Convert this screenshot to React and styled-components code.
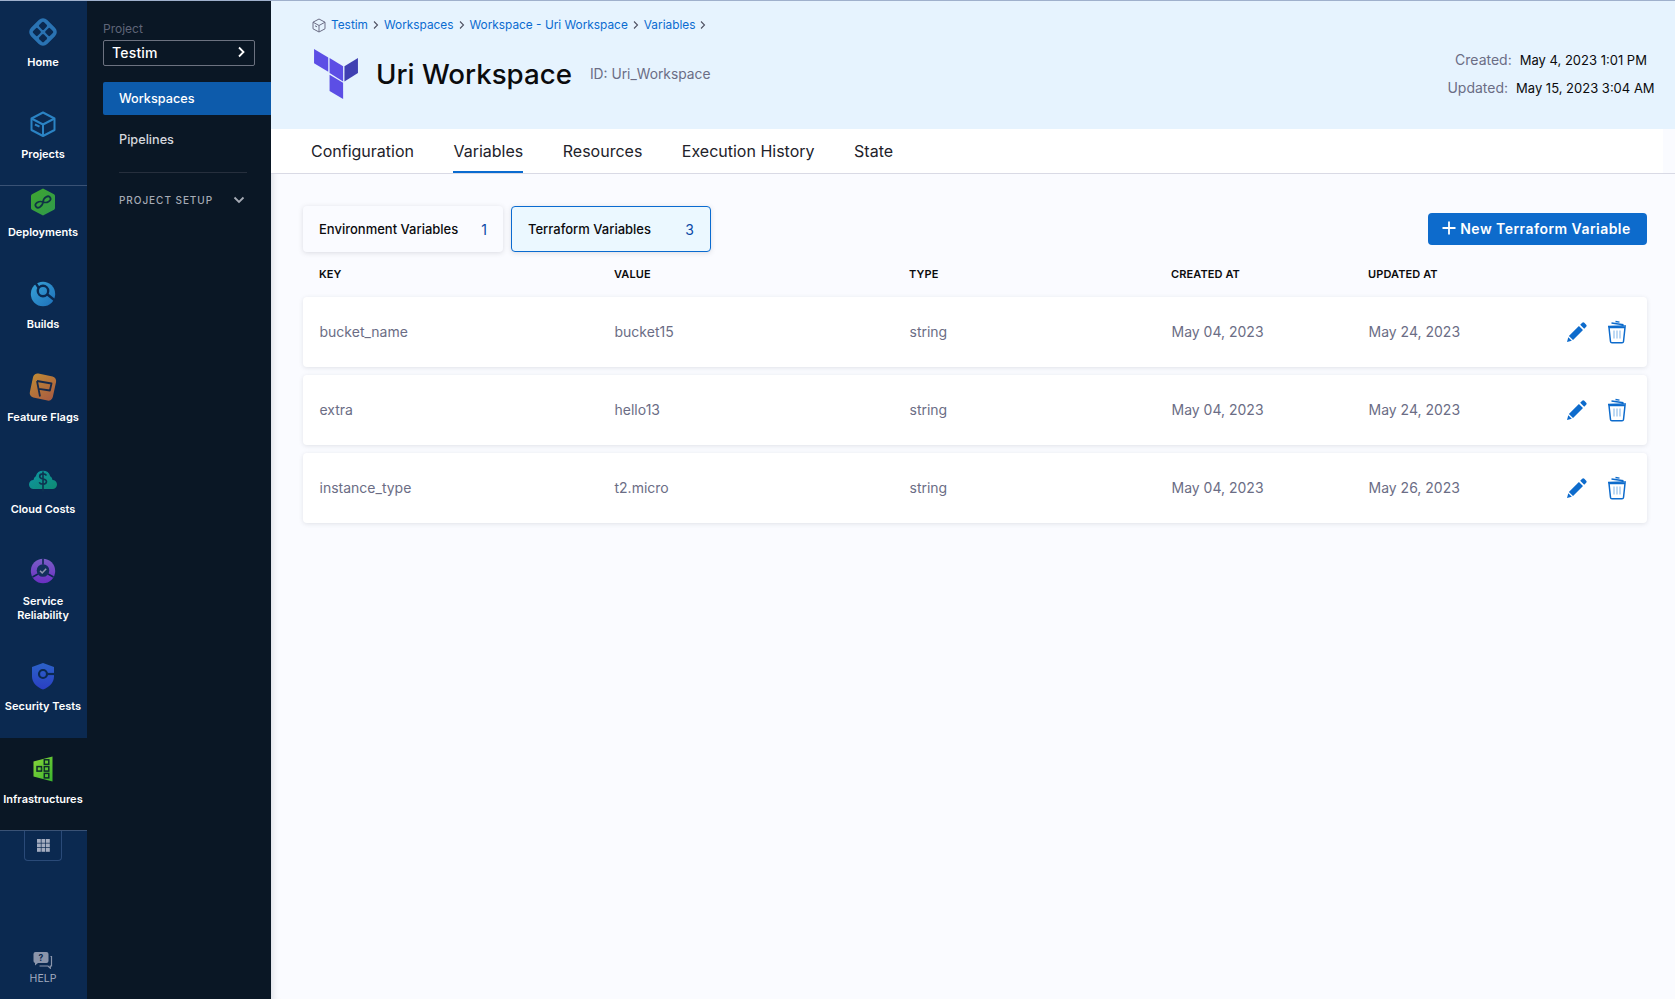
import React from 'react';
import styled, { createGlobalStyle } from 'styled-components';

const Global = createGlobalStyle`
  html, body { margin: 0; padding: 0; height: 100%; overflow: hidden; }
  body { font-family: Inter, "Noto Sans", "Liberation Sans", sans-serif; -webkit-font-smoothing: antialiased; }
  #root { height: 100%; }
  * { box-sizing: border-box; }
`;

const Page = styled.div`
  display: grid;
  grid-template-columns: 87px 184px 1fr;
  height: 999px;
  width: 1675px;
  overflow: hidden;
  background: #fafbff;
  border-top: 1px solid #9fb0cc;
`;

/* ---------- primary nav ---------- */
const Nav = styled.nav`
  display: flex;
  flex-direction: column;
  background: #0b2950;
  height: 998px;
`;
const PinnedGroup = styled.div`
  border-bottom: 1px solid #3a5275;
  height: 185px;
  flex: none;
`;
const NavItem = styled.a`
  display: flex;
  flex-direction: column;
  align-items: center;
  height: ${p => p.$h}px;
  padding: ${p => p.$top}px 1px 0 0;
  background: ${p => (p.$active ? '#0a1725' : 'transparent')};
  flex: none;
`;
const NavLabel = styled.span`
  color: #fff;
  font-size: 11px;
  font-weight: 600;
  line-height: 14px;
  margin-top: 8px;
  text-align: center;
  white-space: pre-line;
`;
const IconBox = styled.span`
  display: block;
  width: 30px;
  height: 30px;
  flex: none;
  svg { display: block; }
`;
const NavRule = styled.div`
  height: 1px;
  background: #3a5275;
  flex: none;
`;
const GridToggle = styled.button`
  width: 38px;
  height: 30px;
  margin-left: 24px;
  background: transparent;
  border: 1px solid #2a4a78;
  border-top: 0;
  border-radius: 0 0 4px 4px;
  display: flex;
  align-items: center;
  justify-content: center;
  padding: 0;
  flex: none;
`;
const HelpLink = styled.a`
  margin-top: auto;
  display: flex;
  flex-direction: column;
  align-items: center;
  padding: 0 1px 13px 0;
  color: #a3acc0;
  font-size: 10.5px;
  line-height: 14px;
`;

/* ---------- secondary nav ---------- */
const Side = styled.aside`
  background: #0a1725;
  padding: 20px 0 0 16px;
  display: flex;
  flex-direction: column;
  position: relative;
  z-index: 1;
`;
const SideCaption = styled.div`
  color: #5f6578;
  font-size: 12px;
  line-height: 15px;
`;
const ProjectSelect = styled.div`
  width: 152px;
  height: 26px;
  margin-top: 4px;
  border: 1px solid #6c7280;
  border-radius: 2px;
  display: flex;
  align-items: center;
  justify-content: space-between;
  padding: 0 7px 2px 8px;
  color: #fff;
  font-size: 14px;
  font-weight: 500;
  letter-spacing: 0.2px;
`;
const SideLink = styled.a`
  display: flex;
  align-items: center;
  height: 33px;
  margin-top: ${p => p.$mt}px;
  padding: 0 0 1px 16px;
  font-size: 12.7px;
  font-weight: 500;
  color: ${p => (p.$active ? '#fff' : '#d5d8de')};
  background: ${p => (p.$active ? '#0d5bab' : 'transparent')};
  border-radius: 2px 0 0 2px;
`;
const SideDivider = styled.div`
  width: 128px;
  height: 1px;
  background: #262f3d;
  margin: 16px 0 0 16px;
`;
const SetupRow = styled.div`
  display: flex;
  align-items: center;
  justify-content: space-between;
  width: 126px;
  margin: 21px 0 0 16px;
  font-size: 10px;
  font-weight: 500;
  letter-spacing: 0.95px;
  color: #a6abb5;
`;

/* ---------- main ---------- */
const Main = styled.main`
  display: flex;
  flex-direction: column;
  min-width: 0;
  box-shadow: inset 8px 0 8px -8px rgba(10, 23, 37, 0.18);
`;
const Header = styled.header`
  height: 128px;
  background: #e6f3fe;
  padding: 16px 0 0 41px;
  position: relative;
  display: flex;
  flex-direction: column;
  flex: none;
`;
const Crumbs = styled.div`
  display: flex;
  align-items: center;
  height: 16px;
  font-size: 11.85px;
  color: #0a6bd0;
`;
const CrumbChevron = styled.svg`
  width: 16px;
  height: 16px;
  flex: none;
`;
const TitleRow = styled.div`
  display: flex;
  align-items: center;
  margin-top: 16px;
  margin-left: 2px;
`;
const Title = styled.h1`
  margin: 0 0 0 18px;
  font-size: 27.7px;
  line-height: 50px;
  font-weight: 500;
  color: #0b0b0d;
`;
const IdText = styled.span`
  margin-left: 18px;
  font-size: 13.8px;
  color: #6b6d85;
`;
const Stamps = styled.div`
  position: absolute;
  top: 51px;
  left: 1100px;
  width: 360px;
  display: flex;
  flex-direction: column;
  align-items: center;
  gap: 12px;
  line-height: 16px;
`;
const StampLine = styled.div`
  display: flex;
  gap: 8px;
  color: #0b0b0d;
  font-size: 13px;
  white-space: nowrap;
`;
const StampKey = styled.span`
  color: #6b6d85;
  font-size: 14px;
`;
const TabStrip = styled.div`
  display: flex;
  gap: 39.5px;
  height: 44px;
  padding-left: 40px;
  margin-right: 12px;
  background: #fff;
  flex: none;
`;
const TabRule = styled.div`
  height: 1px;
  background: #d9dae5;
  flex: none;
`;
const Tab = styled.a`
  display: flex;
  align-items: center;
  height: 44px;
  padding-top: 1px;
  font-size: 16px;
  color: #22222a;
  border-bottom: 2px solid ${p => (p.$active ? '#0a6bd0' : 'transparent')};
`;
const Content = styled.section`
  padding: 32px 28px 0 32px;
  flex: 1;
`;
const Toolbar = styled.div`
  display: flex;
  align-items: center;
  justify-content: space-between;
  height: 46px;
`;
const TypeTabs = styled.div`
  display: flex;
  gap: 8px;
`;
const TypeTab = styled.div`
  width: 200px;
  height: 46px;
  display: flex;
  align-items: center;
  justify-content: space-between;
  padding: 0 ${p => (p.$active ? 16 : 15)}px;
  border-radius: 4px;
  font-size: 13px;
  font-weight: 500;
  color: #0b0b0d;
  background: ${p => (p.$active ? '#ebf8ff' : '#fafbff')};
  border: 1px solid ${p => (p.$active ? '#0a6bd0' : 'transparent')};
  box-shadow: 0 1px 5px rgba(96, 97, 112, 0.2);
`;
const TypeCount = styled.span`
  font-size: 14px;
  font-weight: 400;
  color: #0b4aa6;
`;
const PrimaryButton = styled.button`
  width: 219px;
  height: 32px;
  display: flex;
  align-items: center;
  justify-content: center;
  gap: 4px;
  border: 0;
  border-radius: 4px;
  background: #0d6bcc;
  color: #fff;
  font-family: inherit;
  font-size: 14px;
  font-weight: 600;
  letter-spacing: 0.45px;
  padding: 0 2px 2px 0;
`;
const tableColumns = '295px 295px 262px 197px 1fr auto';
const TableHead = styled.div`
  display: grid;
  grid-template-columns: ${tableColumns};
  padding: 0 16px 2px;
  height: 45px;
  align-items: center;
  font-size: 11px;
  font-weight: 600;
  color: #0b0b0d;
  text-transform: uppercase;
  letter-spacing: 0.1px;
`;
const Rows = styled.div`
  display: flex;
  flex-direction: column;
  gap: 8px;
`;
const Row = styled.div`
  display: grid;
  grid-template-columns: ${tableColumns};
  align-items: center;
  height: 70px;
  padding: 0 20px 2px 16.5px;
  background: #fff;
  border-radius: 4px;
  box-shadow: 0 1px 4px rgba(96, 97, 112, 0.16);
  font-size: 14px;
  color: #6b6d85;
`;
const RowActions = styled.div`
  display: flex;
  align-items: center;
  gap: 19px;
  margin-top: 2px;
`;

/* ---------- drawn icons ---------- */
const HomeIcon = () => (
  <svg width="30" height="30" viewBox="0 0 30 30">
    <rect x="3.500" y="3.500" width="23" height="23" rx="6" fill="#2a73b3" transform="rotate(45 15 15)" />
    {[[15, 8.800], [8.800, 15], [21.200, 15], [15, 21.200]].map(([x, y]) => (
      <rect key={`${x}${y}`} x={x - 3.300} y={y - 3.300} width="6.600" height="6.600" rx="1.500" fill="#0b2950" transform={`rotate(45 ${x} ${y})`} />
    ))}
  </svg>
);
const ProjectsIcon = () => (
  <svg width="30" height="30" viewBox="0 0 30 30" fill="none" stroke="#2b83c4" strokeWidth="2" strokeLinejoin="round">
    <path d="M15 3.500 26.500 9.500V21L15 27 3.500 21V9.500Z" />
    <path d="M3.500 9.500 15 15.500 26.500 9.500M15 15.500V27" />
    <path d="M7 15.500l4.500 2.200" />
  </svg>
);
const DeployIcon = () => (
  <svg width="30" height="30" viewBox="0 0 30 30">
    <defs><linearGradient id="dg" x1="0" y1="0" x2="1" y2="1"><stop offset="0" stopColor="#3fa52f" /><stop offset="1" stopColor="#2f9a4c" /></linearGradient></defs>
    <path d="M15 1.500 26 7.200a2 2 0 0 1 1 1.700v12.200a2 2 0 0 1-1 1.700L15 28.500 4 22.800a2 2 0 0 1-1-1.700V8.900a2 2 0 0 1 1-1.700Z" fill="url(#dg)" />
    <path d="M15 15C12.500 11.500 6.500 11.500 6.500 15S12.500 18.500 15 15C17.500 11.500 23.500 11.500 23.500 15S17.500 18.500 15 15Z" fill="none" stroke="#0f3345" strokeWidth="1.700" transform="rotate(-32 15 15)" />
  </svg>
);
const BuildsIcon = () => (
  <svg width="30" height="30" viewBox="0 0 30 30">
    <defs><linearGradient id="bg" x1="0" y1="0" x2="1" y2="1"><stop offset="0" stopColor="#38a3d8" /><stop offset="1" stopColor="#1d6fb8" /></linearGradient></defs>
    <circle cx="15" cy="15" r="12.200" fill="url(#bg)" />
    <circle cx="15" cy="12" r="5.200" fill="none" stroke="#0b2950" strokeWidth="2.400" />
    <path d="M19.500 15.500l7.500 6M10.500 8.500 7 3.200" stroke="#0b2950" strokeWidth="2.400" />
  </svg>
);
const FlagsIcon = () => (
  <svg width="30" height="30" viewBox="0 0 30 30">
    <defs><linearGradient id="fg" x1="0" y1="0" x2="1" y2="1"><stop offset="0" stopColor="#c08a34" /><stop offset="1" stopColor="#a85a42" /></linearGradient></defs>
    <rect x="3.200" y="2.800" width="23.500" height="24.500" rx="4.500" fill="url(#fg)" transform="rotate(12 15 15)" />
    <path d="M9 9 23.500 11.500l-1.600 7-11-1.600M9 9l3 15.500" fill="none" stroke="#17294a" strokeWidth="1.800" strokeLinejoin="round" />
  </svg>
);
const CloudIcon = () => (
  <svg width="30" height="30" viewBox="0 0 30 30">
    <defs><linearGradient id="cg" x1="0" y1="0" x2="1" y2="1"><stop offset="0" stopColor="#0f97a5" /><stop offset="1" stopColor="#0e8a72" /></linearGradient></defs>
    <path d="M5.500 25a4.500 4.500 0 0 1 0-9A5 5 0 0 1 7.800 12.200 7.500 7.500 0 0 1 22.200 12.200 5 5 0 0 1 24.500 16a4.500 4.500 0 0 1 0 9Z" fill="url(#cg)" />
    <path d="M18.500 11.500c-.8-1.200-2-1.600-3.500-1.600-2 0-3.300 1-3.300 2.500 0 3.500 6.800 1.700 6.800 5.200 0 1.600-1.500 2.600-3.500 2.600-1.700 0-3.100-.6-3.800-1.800M15 7.500v20" fill="none" stroke="#0e3350" strokeWidth="1.600" />
  </svg>
);
const ServiceIcon = () => (
  <svg width="30" height="30" viewBox="0 0 30 30">
    <defs><linearGradient id="sg" x1="0" y1="0" x2="0" y2="1"><stop offset="0" stopColor="#7a5dc7" /><stop offset="1" stopColor="#6a2fc2" /></linearGradient></defs>
    <circle cx="15" cy="15" r="12.200" fill="url(#sg)" />
    <circle cx="15" cy="14.500" r="6.300" fill="#12305c" />
    <path d="M15 2.500v6M4.500 21l5.500-3M25.500 21 20 18" stroke="#0b2950" strokeWidth="1.600" />
    <path d="M12 14.800l2.200 2.100 4-4.200" fill="none" stroke="#8f97ae" strokeWidth="1.500" />
  </svg>
);
const SecurityIcon = () => (
  <svg width="30" height="30" viewBox="0 0 30 30">
    <defs><linearGradient id="xg" x1="0" y1="0" x2="0" y2="1"><stop offset="0" stopColor="#2c62c8" /><stop offset="1" stopColor="#2a3fc4" /></linearGradient></defs>
    <path d="M15 2 26 6v9.500C26 22 20.500 26.500 15 28.500 9.500 26.500 4 22 4 15.500V6Z" fill="url(#xg)" />
    <circle cx="15" cy="13" r="4" fill="none" stroke="#0b2950" strokeWidth="2.200" />
    <path d="M19 13H26" stroke="#0b2950" strokeWidth="2.200" />
  </svg>
);
const InfraIcon = () => (
  <svg width="30" height="30" viewBox="0 0 30 30">
    <defs><linearGradient id="ig" x1="0" y1="0" x2="1" y2="1"><stop offset="0" stopColor="#8ad63a" /><stop offset="1" stopColor="#3ab52e" /></linearGradient></defs>
    <path d="M5.500 7.500 24.500 2.500v25L5.500 22.500Z" fill="url(#ig)" />
    <g fill="none" stroke="#0e2a2a" strokeWidth="1.500">
      <rect x="16.300" y="5.800" width="4.500" height="4.500" />
      <rect x="16.300" y="12.600" width="4.500" height="4.500" />
      <rect x="16.300" y="19.400" width="4.500" height="4.500" />
      <rect x="9" y="12.600" width="4.500" height="4.500" />
    </g>
    <path d="M13.500 15h2.800" stroke="#3f8a36" strokeWidth="1" />
  </svg>
);
const GridIcon = () => (
  <svg width="13" height="13" viewBox="0 0 13 13" fill="#a3acc0">
    {[0, 4.500, 9].flatMap(x => [0, 4.500, 9].map(y => <rect key={`${x}-${y}`} x={x} y={y} width="3.800" height="3.800" />))}
  </svg>
);
const HelpIcon = () => (
  <svg width="20" height="17" viewBox="0 0 20 17" style={{ marginBottom: 3 }}>
    <path d="M2.500 0h11A2 2 0 0 1 15.500 2v7a2 2 0 0 1-2 2H5L2 13.500V11A2 2 0 0 1 .500 9V2A2 2 0 0 1 2.500 0Z" fill="#8b95ab" />
    <path d="M17.500 4.500h1v9.500h-1.200v2.200L15 14H6.500" fill="none" stroke="#8b95ab" strokeWidth="1.200" />
    <text x="8" y="8.500" fontSize="8.500" fontWeight="700" textAnchor="middle" fill="#0b2950" fontFamily="Inter, sans-serif">?</text>
  </svg>
);
const ChevronRight = ({ color = '#fff', size = 12 }) => (
  <svg width={size} height={size} viewBox="0 0 12 12" fill="none" stroke={color} strokeWidth="1.800"><path d="M4 1.500 8.500 6 4 10.500" /></svg>
);
const ChevronDown = () => (
  <svg width="12" height="8" viewBox="0 0 12 8" fill="none" stroke="#a6abb5" strokeWidth="1.800"><path d="M1.500 1.500 6 6l4.500-4.500" /></svg>
);
const CrumbBox = () => (
  <svg width="14" height="15" viewBox="0 0 14 15" fill="none" stroke="#6b6d85" strokeWidth="1" strokeLinejoin="round" style={{ marginRight: 5 }}>
    <path d="M7 1 13 4.200v6.600L7 14 1 10.800V4.200Z" />
    <path d="M1 4.200 7 7.500l6-3.300M7 7.500V14M3 7.800l2 1" />
  </svg>
);
const Sep = () => (
  <CrumbChevron viewBox="0 0 16 16" fill="none" stroke="#4f5162" strokeWidth="1.100"><path d="M6 4.500 9.500 8 6 11.500" /></CrumbChevron>
);
const TerraformLogo = () => (
  <svg width="44" height="50" viewBox="133 148 130 148">
    <polygon points="133,148 175,173 175,215 133,190" fill="#5c4ee5" />
    <polygon points="179,175 219,199 219,244 179,219" fill="#5c4ee5" />
    <polygon points="223,199 263,175 263,219 223,244" fill="#4040b2" />
    <polygon points="179,224 219,248 219,296 179,272" fill="#5c4ee5" />
  </svg>
);
const PlusIcon = () => (
  <svg width="14" height="14" viewBox="0 0 14 14" stroke="#fff" strokeWidth="1.800"><path d="M7 .500v13M.500 7h13" /></svg>
);
const EditIcon = () => (
  <svg width="22" height="22" viewBox="0 0 22 22" fill="#0d6bcc">
    <path d="M16.200 1.800a1.500 1.500 0 0 1 2.100 0l1.900 1.900a1.500 1.500 0 0 1 0 2.100l-2 2-4-4ZM12.900 5 17 9.100 7 19 2.900 15Z" />
    <path d="M2.300 16.200 5.800 19.700 1 21Z" />
  </svg>
);
const TrashIcon = () => (
  <svg width="20" height="24" viewBox="0 0 20 24" fill="none" stroke="#0d6bcc">
    <path d="M2 7.500h16l-1.500 14a1.500 1.500 0 0 1-1.500 1.300H5a1.500 1.500 0 0 1-1.500-1.300Z" strokeWidth="1.500" />
    <path d="M1 6.500 19 6M4.500 3l12 1.800M8.500 1.500l4 .6" strokeWidth="1.400" />
    <path d="M7 10.500v8M10 10.500v8M13 10.500v8" stroke="#a9cdf0" strokeWidth="1.500" />
  </svg>
);

const rows = [
  ['bucket_name', 'bucket15', 'string', 'May 04, 2023', 'May 24, 2023'],
  ['extra', 'hello13', 'string', 'May 04, 2023', 'May 24, 2023'],
  ['instance_type', 't2.micro', 'string', 'May 04, 2023', 'May 26, 2023'],
];
const crumbs = ['Testim', 'Workspaces', 'Workspace - Uri Workspace', 'Variables'];
const tabs = ['Configuration', 'Variables', 'Resources', 'Execution History', 'State'];

export default function App() {
  return (
    <Page>
      <Global />
      <Nav>
        <PinnedGroup>
          <NavItem $h={93} $top={16}><IconBox><HomeIcon /></IconBox><NavLabel>Home</NavLabel></NavItem>
          <NavItem $h={91} $top={15}><IconBox><ProjectsIcon /></IconBox><NavLabel>Projects</NavLabel></NavItem>
        </PinnedGroup>
        <NavItem $h={76} $top={1}><IconBox><DeployIcon /></IconBox><NavLabel>Deployments</NavLabel></NavItem>
        <NavItem $h={93} $top={17}><IconBox><BuildsIcon /></IconBox><NavLabel>Builds</NavLabel></NavItem>
        <NavItem $h={92} $top={17}><IconBox><FlagsIcon /></IconBox><NavLabel>Feature Flags</NavLabel></NavItem>
        <NavItem $h={92} $top={17}><IconBox><CloudIcon /></IconBox><NavLabel>Cloud Costs</NavLabel></NavItem>
        <NavItem $h={106} $top={17}><IconBox><ServiceIcon /></IconBox><NavLabel>{'Service\nReliability'}</NavLabel></NavItem>
        <NavItem $h={93} $top={16}><IconBox><SecurityIcon /></IconBox><NavLabel>Security Tests</NavLabel></NavItem>
        <NavItem $h={92} $active $top={16}><IconBox><InfraIcon /></IconBox><NavLabel>Infrastructures</NavLabel></NavItem>
        <NavRule />
        <GridToggle aria-label="All modules"><GridIcon /></GridToggle>
        <HelpLink><HelpIcon />HELP</HelpLink>
      </Nav>

      <Side>
        <SideCaption>Project</SideCaption>
        <ProjectSelect>Testim<ChevronRight /></ProjectSelect>
        <SideLink $active $mt={16}>Workspaces</SideLink>
        <SideLink $mt={8}>Pipelines</SideLink>
        <SideDivider />
        <SetupRow>PROJECT SETUP<ChevronDown /></SetupRow>
      </Side>

      <Main>
        <Header>
          <Crumbs>
            <CrumbBox />
            {crumbs.map(c => (
              <React.Fragment key={c}>{c}<Sep /></React.Fragment>
            ))}
          </Crumbs>
          <TitleRow>
            <TerraformLogo />
            <Title>Uri Workspace</Title>
            <IdText>ID: Uri_Workspace</IdText>
          </TitleRow>
          <Stamps>
            <StampLine><StampKey>Created:</StampKey>May 4, 2023 1:01 PM</StampLine>
            <StampLine><StampKey>Updated:</StampKey>May 15, 2023 3:04 AM</StampLine>
          </Stamps>
        </Header>
        <TabStrip>
          {tabs.map(t => <Tab key={t} $active={t === 'Variables'}>{t}</Tab>)}
        </TabStrip>
        <TabRule />
        <Content>
          <Toolbar>
            <TypeTabs>
              <TypeTab>Environment Variables<TypeCount>1</TypeCount></TypeTab>
              <TypeTab $active>Terraform Variables<TypeCount>3</TypeCount></TypeTab>
            </TypeTabs>
            <PrimaryButton><PlusIcon />New Terraform Variable</PrimaryButton>
          </Toolbar>
          <TableHead>
            <span>Key</span><span>Value</span><span>Type</span><span>Created at</span><span>Updated at</span>
          </TableHead>
          <Rows>
            {rows.map(r => (
              <Row key={r[0]}>
                <span>{r[0]}</span>
                <span>{r[1]}</span>
                <span>{r[2]}</span>
                <span>{r[3]}</span>
                <span>{r[4]}</span>
                <RowActions>
                  <EditIcon />
                  <TrashIcon />
                </RowActions>
              </Row>
            ))}
          </Rows>
        </Content>
      </Main>
    </Page>
  );
}
